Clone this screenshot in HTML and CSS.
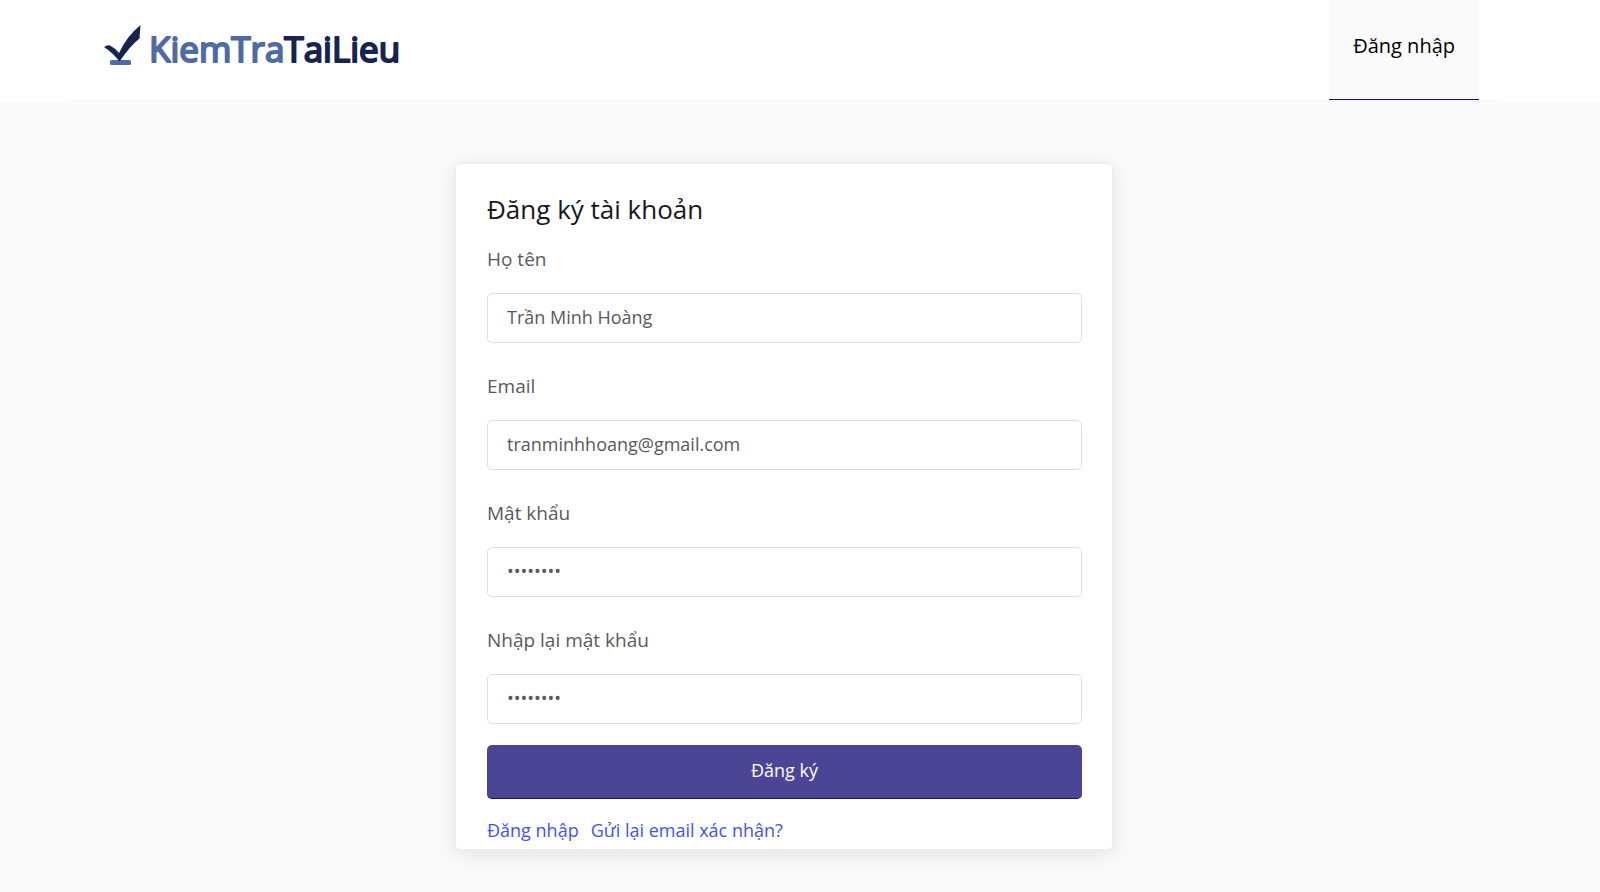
FILE: index.html
```
<!DOCTYPE html>
<html lang="vi">
<head>
    <meta charset="UTF-8">
    <meta name="viewport" content="width=device-width, initial-scale=1.0">
    <title>Đăng ký tài khoản - KiemTraTaiLieu</title>
    <link rel="stylesheet" href="styles.css">
</head>
<body>
    <header class="header">
        <div class="header-inner">
            <a href="#" class="logo">
                <svg width="320" height="60" viewBox="0 0 320 60">
                    <rect x="6" y="35" width="21" height="5" rx="1.5" fill="#4f6ba3"/>
                    <path d="M0 22 Q3 19.500 6 20.500 Q11 23 15 28 Q23 11 36.500 0 L35.500 13.500 Q26 21 15.500 36.500 Q9 28 0 22 Z" fill="#17244f"/>
                    <text x="45" y="37" class="logo-text"><tspan class="logo-light">KiemTra</tspan><tspan class="logo-dark">TaiLieu</tspan></text>
                </svg>
            </a>
            <nav class="nav">
                <a href="#" class="nav-link">Đăng nhập</a>
            </nav>
        </div>
    </header>

    <main class="container">
        <form class="card">
            <h1>Đăng ký tài khoản</h1>

            <div class="form-group">
                <label for="name">Họ tên</label>
                <input type="text" id="name" value="Trần Minh Hoàng">
            </div>

            <div class="form-group">
                <label for="email">Email</label>
                <input type="email" id="email" value="tranminhhoang@gmail.com">
            </div>

            <div class="form-group">
                <label for="password">Mật khẩu</label>
                <input type="password" id="password" value="12345678">
            </div>

            <div class="form-group">
                <label for="confirm">Nhập lại mật khẩu</label>
                <input type="password" id="confirm" value="12345678">
            </div>

            <button type="button" class="btn">Đăng ký</button>

            <div class="links">
                <a href="#">Đăng nhập</a>
                <a href="#">Gửi lại email xác nhận?</a>
            </div>
        </form>
    </main>
</body>
</html>
```
FILE: styles.css
```
:root {
    --primary: #4b4596;
    --primary-dark: #1f0a8c;
    --bg: #fafafa;
    --text: #58595e;
    --border: #dfdfe9;
    --link: #4353f0;
}

* {
    box-sizing: border-box;
}

body {
    font-family: "Open Sans", "Noto Sans", sans-serif;
    margin: 0;
    background-color: var(--bg);
    color: var(--text);
    min-height: 100vh;
}

a {
    text-decoration: none;
}

.header {
    background-color: #fff;
    padding: 0 103px 0 71px;
}

.header-inner {
    display: flex;
    justify-content: space-between;
    height: 101px;
    padding: 0 18px 0 33px;
    border-bottom: 1px solid #f4f4f5;
}

.logo {
    padding-top: 25px;
}

.logo-text {
    font-family: "Open Sans", sans-serif;
    font-size: 35px;
    font-weight: 400;
    stroke-width: 2px;
    stroke-linejoin: round;
}

.logo-light {
    fill: #4f6ba3;
    stroke: #4f6ba3;
}

.logo-dark {
    fill: #17244f;
    stroke: #17244f;
}

.nav {
    display: flex;
}

.nav-link {
    padding: 32px 24px 0;
    font-size: 20px;
    line-height: 28px;
    color: #000;
    background-color: var(--bg);
    border-bottom: 1px solid var(--primary-dark);
}

.container {
    padding: 62px 32px 42px 0;
}

.card {
    max-width: 658px;
    margin: 0 auto;
    padding: 27px 30px 5px 31px;
    background-color: #fff;
    border: 1px solid #ececf4;
    border-radius: 4px;
    box-shadow: 0 4px 20px rgba(0, 0, 0, 0.1);
}

h1 {
    margin: 0 0 18px;
    font-size: 26px;
    font-weight: 400;
    line-height: 36px;
    color: #18181b;
}

.form-group {
    margin-bottom: 29px;
}

label {
    display: block;
    margin-bottom: 20px;
    font-size: 19px;
    line-height: 28px;
}

input {
    display: block;
    width: 100%;
    height: 50px;
    padding: 0 19px 2px;
    border: 1px solid var(--border);
    border-radius: 5px;
    background-color: #fff;
    color: var(--text);
    font-family: inherit;
    font-size: 18px;
}

input:focus {
    outline: none;
    border-color: var(--primary);
}

.form-group:nth-of-type(4) {
    margin-bottom: 21px;
}

.btn {
    display: block;
    width: 100%;
    height: 54px;
    padding: 0 0 3px;
    border: none;
    border-bottom: 1px solid var(--primary-dark);
    border-radius: 5px;
    background-color: var(--primary);
    color: #fff;
    font-family: inherit;
    font-size: 18px;
    font-weight: 500;
    cursor: pointer;
}

.links {
    display: flex;
    gap: 12px;
    margin-top: 17px;
    font-size: 18px;
    line-height: 28px;
}

.links a {
    color: var(--link);
}
```
